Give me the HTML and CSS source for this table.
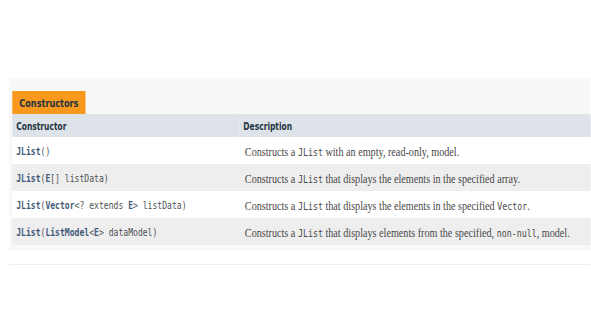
FILE: index.html
```html
<!DOCTYPE html>
<html lang="en">
<head>
<meta charset="utf-8">
<title>JList constructors</title>
<link rel="stylesheet" href="styles.css">
</head>
<body>
<main class="page">
  <section class="summary">
    <div class="caption"><span>Constructors</span></div>
    <div class="table">
      <div class="head">Constructor</div>
      <div class="head">Description</div>

      <div class="cell code even"><b>JList</b>()</div>
      <div class="cell desc even">Constructs a <code>JList</code> with an empty, read-only, model.</div>

      <div class="cell code odd"><b>JList</b>(<b>E</b>[] listData)</div>
      <div class="cell desc odd">Constructs a <code>JList</code> that displays the elements in the specified array.</div>

      <div class="cell code even"><b>JList</b>(<b>Vector</b>&lt;? extends <b>E</b>&gt; listData)</div>
      <div class="cell desc even">Constructs a <code>JList</code> that displays the elements in the specified <code>Vector</code>.</div>

      <div class="cell code odd"><b>JList</b>(<b>ListModel</b>&lt;<b>E</b>&gt; dataModel)</div>
      <div class="cell desc odd">Constructs a <code>JList</code> that displays elements from the specified, <code>non-null</code>, model.</div>
    </div>
  </section>
  <div class="next"></div>
</main>
</body>
</html>
```
FILE: styles.css
```css
html, body {
  margin: 0;
  background: #ffffff;
  overflow: hidden;
}

body {
  padding-top: 78px;
  font-family: "DejaVu Sans", sans-serif;
  color: #253441;
}

/* the page is laid out wide and drawn narrowed horizontally */
.page {
  width: 767px;
  transform: scaleX(0.77);
  transform-origin: 0 0;
}

.summary {
  margin-left: 12px;
  background: #f8f8f8;
  padding: 13px 0 6px 4px;
}

.caption {
  display: flex;
}

.caption span {
  background: #f8981d;
  height: 23px;
  width: 86px;
  padding-left: 9px;
  font-weight: bold;
  font-size: 10.6px;
  line-height: 25px;
  color: #253441;
  white-space: nowrap;
}

.table {
  display: grid;
  grid-template-columns: 295px 1fr;
}

.head {
  background: #dee3e9;
  height: 23px;
  line-height: 26px;
  font-weight: bold;
  font-size: 9.8px;
  padding-left: 5px;
  white-space: nowrap;
}

.cell {
  height: 27px;
  line-height: 29px;
  white-space: nowrap;
  overflow: hidden;
}

.even { background: #ffffff; }
.odd { background: #eeeeef; }

.code {
  padding-left: 5px;
  font-family: "DejaVu Sans Mono", monospace;
  font-size: 10.5px;
  color: #4d4f52;
}

.code b {
  color: #3f5a78;
}

.desc {
  padding-left: 7px;
  font-family: "Liberation Serif", serif;
  font-size: 13.2px;
  color: #484848;
}

.desc code {
  font-family: "DejaVu Sans Mono", monospace;
  font-size: 10.8px;
}

.next {
  margin: 13px 0 0 12px;
  border-top: 1px solid #eeeeee;
}
```
